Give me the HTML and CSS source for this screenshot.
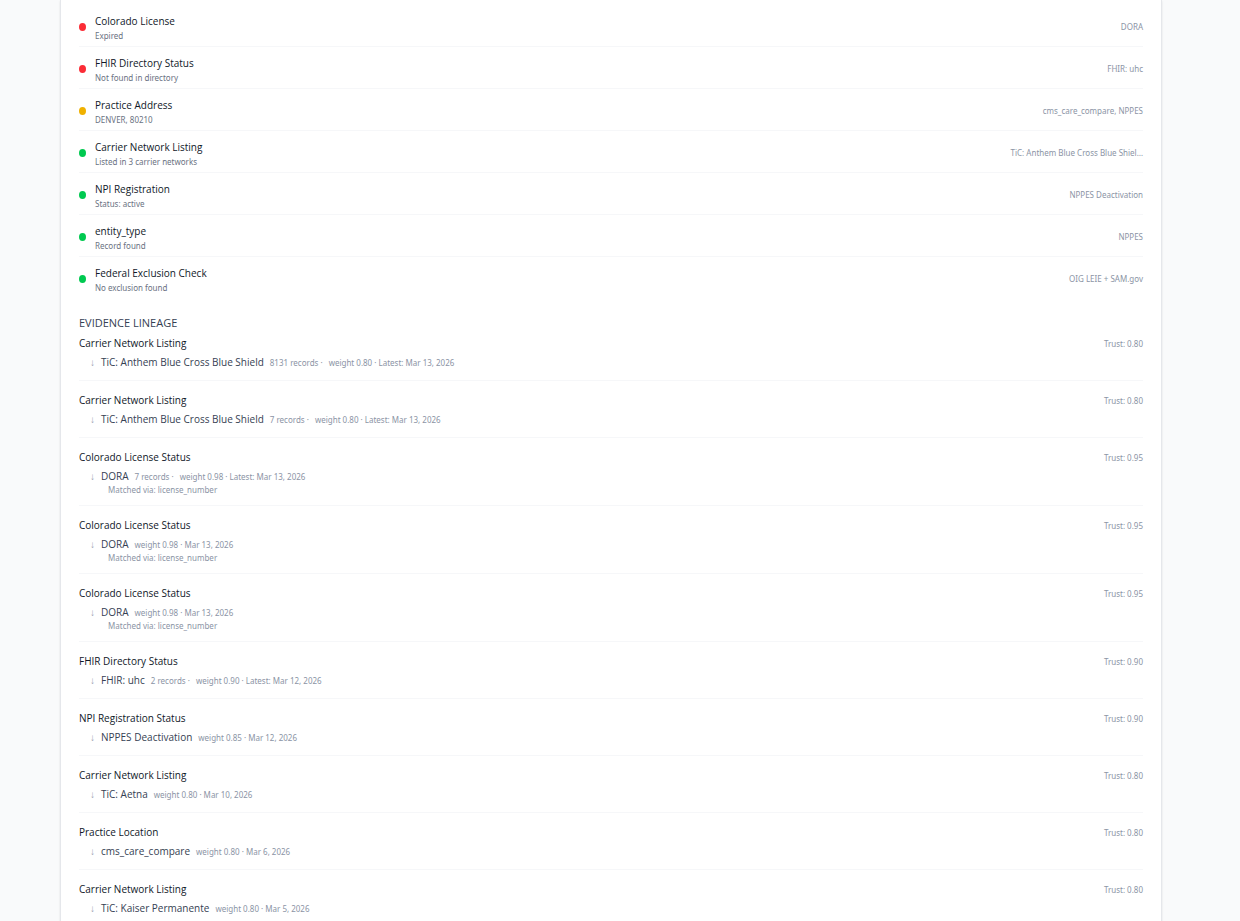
FILE: index.html
```html
<!DOCTYPE html>
<html lang="en">

<head>
  <meta charset="UTF-8">
  <meta name="viewport" content="width=device-width, initial-scale=1">
  <title>Provider Evidence</title>
  <link rel="stylesheet" href="styles.css">
</head>

<body>
  <main class="card">
    <ul class="signals">
      <li class="signal">
        <span class="dot red"></span>
        <div class="signal-text">
          <p class="name">Colorado License</p>
          <p class="detail">Expired</p>
        </div>
        <span class="source">DORA</span>
      </li>
      <li class="signal">
        <span class="dot red"></span>
        <div class="signal-text">
          <p class="name">FHIR Directory Status</p>
          <p class="detail">Not found in directory</p>
        </div>
        <span class="source">FHIR: uhc</span>
      </li>
      <li class="signal">
        <span class="dot yellow"></span>
        <div class="signal-text">
          <p class="name">Practice Address</p>
          <p class="detail">DENVER, 80210</p>
        </div>
        <span class="source">cms_care_compare, NPPES</span>
      </li>
      <li class="signal">
        <span class="dot green"></span>
        <div class="signal-text">
          <p class="name">Carrier Network Listing</p>
          <p class="detail">Listed in 3 carrier networks</p>
        </div>
        <span class="source">TiC: Anthem Blue Cross Blue Shiel…</span>
      </li>
      <li class="signal">
        <span class="dot green"></span>
        <div class="signal-text">
          <p class="name">NPI Registration</p>
          <p class="detail">Status: active</p>
        </div>
        <span class="source">NPPES Deactivation</span>
      </li>
      <li class="signal">
        <span class="dot green"></span>
        <div class="signal-text">
          <p class="name">entity_type</p>
          <p class="detail">Record found</p>
        </div>
        <span class="source">NPPES</span>
      </li>
      <li class="signal">
        <span class="dot green"></span>
        <div class="signal-text">
          <p class="name">Federal Exclusion Check</p>
          <p class="detail">No exclusion found</p>
        </div>
        <span class="source">OIG LEIE + SAM.gov</span>
      </li>
    </ul>

    <h2 class="heading">Evidence Lineage</h2>

    <ul class="lineage">
      <li class="item">
        <div class="item-head"><h3 class="name">Carrier Network Listing</h3><span class="trust">Trust: 0.80</span></div>
        <div class="entry"><span class="arrow">↓</span><span class="origin">TiC: Anthem Blue Cross Blue Shield</span><span class="meta">8131 records ·</span><span class="meta">weight 0.80 · Latest: Mar 13, 2026</span></div>
      </li>
      <li class="item">
        <div class="item-head"><h3 class="name">Carrier Network Listing</h3><span class="trust">Trust: 0.80</span></div>
        <div class="entry"><span class="arrow">↓</span><span class="origin">TiC: Anthem Blue Cross Blue Shield</span><span class="meta">7 records ·</span><span class="meta">weight 0.80 · Latest: Mar 13, 2026</span></div>
      </li>
      <li class="item">
        <div class="item-head"><h3 class="name">Colorado License Status</h3><span class="trust">Trust: 0.95</span></div>
        <div class="entry"><span class="arrow">↓</span><span class="origin">DORA</span><span class="meta">7 records ·</span><span class="meta">weight 0.98 · Latest: Mar 13, 2026</span></div>
        <p class="matched">Matched via: license_number</p>
      </li>
      <li class="item">
        <div class="item-head"><h3 class="name">Colorado License Status</h3><span class="trust">Trust: 0.95</span></div>
        <div class="entry"><span class="arrow">↓</span><span class="origin">DORA</span><span class="meta">weight 0.98 · Mar 13, 2026</span></div>
        <p class="matched">Matched via: license_number</p>
      </li>
      <li class="item">
        <div class="item-head"><h3 class="name">Colorado License Status</h3><span class="trust">Trust: 0.95</span></div>
        <div class="entry"><span class="arrow">↓</span><span class="origin">DORA</span><span class="meta">weight 0.98 · Mar 13, 2026</span></div>
        <p class="matched">Matched via: license_number</p>
      </li>
      <li class="item">
        <div class="item-head"><h3 class="name">FHIR Directory Status</h3><span class="trust">Trust: 0.90</span></div>
        <div class="entry"><span class="arrow">↓</span><span class="origin">FHIR: uhc</span><span class="meta">2 records ·</span><span class="meta">weight 0.90 · Latest: Mar 12, 2026</span></div>
      </li>
      <li class="item">
        <div class="item-head"><h3 class="name">NPI Registration Status</h3><span class="trust">Trust: 0.90</span></div>
        <div class="entry"><span class="arrow">↓</span><span class="origin">NPPES Deactivation</span><span class="meta">weight 0.85 · Mar 12, 2026</span></div>
      </li>
      <li class="item">
        <div class="item-head"><h3 class="name">Carrier Network Listing</h3><span class="trust">Trust: 0.80</span></div>
        <div class="entry"><span class="arrow">↓</span><span class="origin">TiC: Aetna</span><span class="meta">weight 0.80 · Mar 10, 2026</span></div>
      </li>
      <li class="item">
        <div class="item-head"><h3 class="name">Practice Location</h3><span class="trust">Trust: 0.80</span></div>
        <div class="entry"><span class="arrow">↓</span><span class="origin">cms_care_compare</span><span class="meta">weight 0.80 · Mar 6, 2026</span></div>
      </li>
      <li class="item">
        <div class="item-head"><h3 class="name">Carrier Network Listing</h3><span class="trust">Trust: 0.80</span></div>
        <div class="entry"><span class="arrow">↓</span><span class="origin">TiC: Kaiser Permanente</span><span class="meta">weight 0.80 · Mar 5, 2026</span></div>
      </li>
    </ul>
  </main>
</body>

</html>
```

FILE: styles.css
```css
* {
  margin: 0;
  padding: 0;
  box-sizing: border-box;
}

body {
  background-color: #f9fafb;
  font-family: "Open Sans", "Noto Sans", sans-serif;
  font-size: 10px;
  color: #101828;
  padding: 0 78px 0 60px;
}

ul {
  list-style: none;
}

.card {
  background-color: #fff;
  border: 1px solid #e5e7eb;
  border-width: 0 1px;
  padding: 5px 18px 0;
  box-shadow: 0 1px 2px rgba(0, 0, 0, 0.1);
}

.signal {
  display: flex;
  align-items: center;
  gap: 9px;
  padding: 7px 0 5px;
  border-bottom: 1px solid #f6f7f9;
}

.signal:last-child {
  border-bottom: none;
}

.signal-text {
  flex: 1;
}

.dot {
  width: 7px;
  height: 8px;
  border-radius: 50%;
}

.red {
  background-color: #fb2c36;
}

.yellow {
  background-color: #f0b100;
}

.green {
  background-color: #00c950;
}

.name {
  font-size: 10px;
  font-weight: 500;
  line-height: 18px;
}

.detail,
.source,
.trust,
.meta,
.matched {
  font-family: "Noto Sans", "Open Sans", sans-serif;
  font-size: 8px;
  line-height: 11px;
  color: #8b94a5;
}

.detail {
  color: #6a7282;
}

.source {
  white-space: nowrap;
}

.heading {
  margin: 15px 0 1px;
  font-size: 11px;
  font-weight: 500;
  line-height: 20px;
  text-transform: uppercase;
  color: #364153;
}

.item {
  padding-bottom: 10px;
  margin-bottom: 10px;
  border-bottom: 1px solid #f6f7f9;
}

.item-head {
  display: flex;
  justify-content: space-between;
  align-items: center;
}

.entry {
  display: flex;
  align-items: center;
  gap: 6px;
  margin: 2px 0 0 11px;
  line-height: 16px;
}

.arrow {
  font-size: 10px;
  color: #99a1af;
}

.origin {
  font-size: 10px;
  color: #364153;
}

.matched {
  margin-left: 29px;
}
```
